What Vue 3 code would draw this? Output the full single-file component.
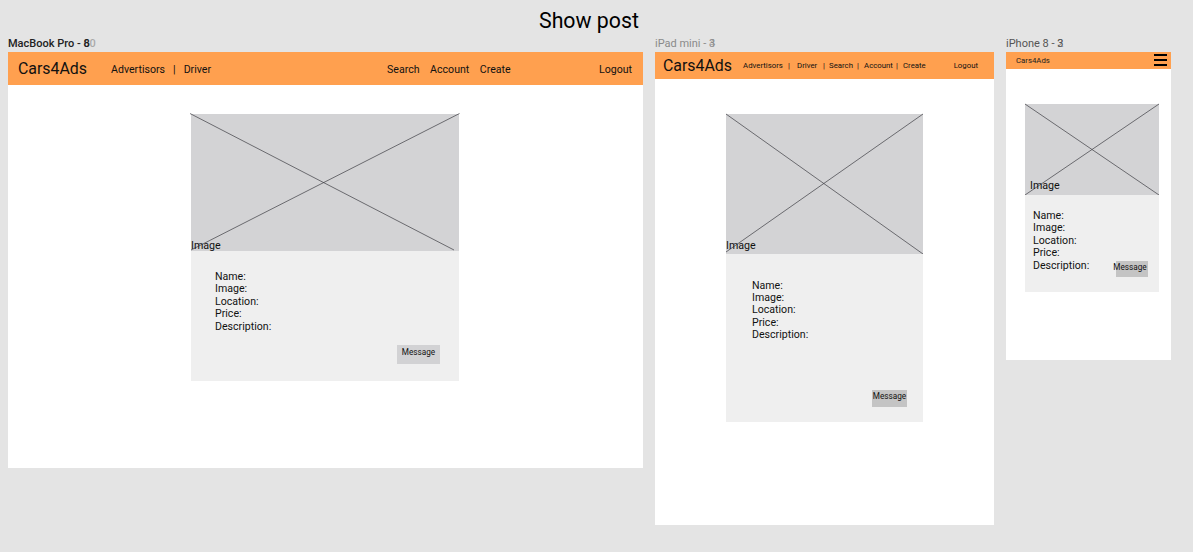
<script setup>
const fields = ['Name:', 'Image:', 'Location:', 'Price:', 'Description:']
const macLinks = ['Search', 'Account', 'Create']
const ipadLinks = [
  { text: 'Advertisors', cls: 'w-adv' },
  { text: '|', cls: 'w-sep1' },
  { text: 'Driver', cls: 'w-drv' },
  { text: '|', cls: 'w-sep2' },
  { text: 'Search', cls: 'w-sea' },
  { text: '|', cls: 'w-sep3' },
  { text: 'Account', cls: 'w-acc' },
  { text: '|', cls: 'w-sep3' },
  { text: 'Create', cls: 'w-cre' }
]
</script>

<template>
  <div class="canvas">
    <h1 class="title">Show post</h1>

    <!-- MacBook frame -->
    <div class="label label-mac">MacBook Pro - <span class="ghost">8<i>6</i><i class="faint">0</i></span></div>
    <section class="frame mac">
      <header class="bar">
        <span class="brand">Cars4Ads</span>
        <nav class="left-nav"><span>Advertisors</span><span>|</span><span>Driver</span></nav>
        <nav class="mid-nav"><span v-for="l in macLinks" :key="l">{{ l }}</span></nav>
        <span class="logout">Logout</span>
      </header>
      <div class="post">
        <div class="media">
          <svg class="cross" viewBox="0 0 270 139" width="270" height="139">
            <line x1="0" y1="0.5" x2="264" y2="137" />
            <line x1="269.5" y1="0.5" x2="1" y2="137" />
          </svg>
          <span class="media-label">Image</span>
        </div>
        <div class="details">
          <p v-for="f in fields" :key="f">{{ f }}</p>
          <button class="msg">Message</button>
        </div>
      </div>
    </section>

    <!-- iPad frame -->
    <div class="label label-ipad">iPad mini - <span class="ghost">3<i>4</i></span></div>
    <section class="frame ipad">
      <header class="bar">
        <span class="brand">Cars4Ads</span>
        <nav class="tight-nav"><span v-for="(l, i) in ipadLinks" :key="i" :class="l.cls">{{ l.text }}</span></nav>
        <span class="logout">Logout</span>
      </header>
      <div class="post">
        <div class="media">
          <svg class="cross" viewBox="0 0 197 140" width="197" height="140">
            <line x1="0" y1="0" x2="197" y2="140" />
            <line x1="197" y1="0" x2="0" y2="138" />
          </svg>
          <span class="media-label">Image</span>
        </div>
        <div class="details">
          <p v-for="f in fields" :key="f">{{ f }}</p>
          <button class="msg">Message</button>
        </div>
      </div>
    </section>

    <!-- iPhone frame -->
    <div class="label label-phone">iPhone 8 - <span class="ghost">3<i>2</i></span></div>
    <section class="frame phone">
      <header class="bar">
        <span class="brand">Cars4Ads</span>
        <span class="burger"><b></b><b></b><b></b></span>
      </header>
      <div class="post">
        <div class="media">
          <svg class="cross" viewBox="0 0 134 91" width="134" height="91">
            <line x1="0" y1="0" x2="134" y2="91" />
            <line x1="134" y1="0" x2="0" y2="91" />
          </svg>
          <span class="media-label">Image</span>
        </div>
        <div class="details">
          <p v-for="f in fields" :key="f">{{ f }}</p>
          <button class="msg"><span class="msg-text">Message</span></button>
        </div>
      </div>
    </section>
  </div>
</template>

<style>
html, body { margin: 0; background: #e4e4e4; }
</style>

<style scoped>
.canvas {
  position: relative;
  width: 1193px;
  height: 552px;
  overflow: hidden;
  background: #e4e4e4;
  color: #111;
  font-family: Roboto, "Liberation Sans", sans-serif;
}
.title {
  margin: 0;
  padding-top: 8px;
  padding-left: 539px;
  font-size: 21.3px;
  line-height: 26px;
  font-weight: 400;
  color: #000;
}

/* Artboards sit on a free canvas */
.label {
  position: absolute;
  top: 37px;
  font-size: 11px;
  line-height: 13px;
  white-space: nowrap;
}
.label-mac { left: 8px; color: #222; font-weight: 500; }
.label-ipad { left: 655px; color: #8a8a8a; }
.label-phone { left: 1006px; color: #555; }
.ghost { position: relative; display: inline-block; }
.ghost i {
  position: absolute;
  left: 0;
  top: 0;
  font-style: normal;
  opacity: 0.6;
}
.ghost i.faint { left: 6px; opacity: 0.3; }

.frame {
  position: absolute;
  top: 52px;
  background: #fff;
  display: flex;
  flex-direction: column;
}
.mac { left: 8px; width: 635px; height: 416px; }
.ipad { left: 655px; width: 339px; height: 473px; }
.phone { left: 1006px; width: 165px; height: 308px; }

.bar {
  display: flex;
  align-items: center;
  background: #ffa04f;
  flex: none;
}
.mac .bar { height: 33px; padding: 0 11px 0 10px; font-size: 10.6px; }
.ipad .bar { height: 27px; padding: 0 16px 0 8px; font-size: 7.8px; }
.phone .bar { height: 17px; padding: 0 4px 0 10px; }

.brand { font-size: 15.9px; line-height: 20px; }
.phone .brand { font-size: 7.8px; line-height: 10px; color: #222; }

.left-nav { display: flex; gap: 8px; margin-left: 24px; }
.mid-nav { display: flex; gap: 10.5px; margin-left: 176px; }
.mac .logout { margin-left: auto; }
.mac nav, .mac .logout { padding-top: 2px; }

.tight-nav { display: flex; margin-left: 11px; }
.tight-nav span { flex: none; white-space: nowrap; }
.w-adv { width: 45px; }
.w-sep1 { width: 9px; }
.w-drv { width: 26px; }
.w-sep2 { width: 6px; }
.w-sea { width: 28px; }
.w-sep3 { width: 7px; }
.w-acc { width: 32px; }
.w-cre { width: 22px; }
.ipad .logout { margin-left: auto; }

.burger {
  margin-left: auto;
  display: flex;
  flex-direction: column;
  gap: 2.4px;
  width: 13px;
  margin-bottom: 1px;
}
.burger b { display: block; height: 2.4px; background: #000; }

.post { display: flex; flex-direction: column; }
.mac .post { padding: 29px 0 0 183px; width: 268px; }
.ipad .post { padding: 35px 0 0 71px; width: 197px; }
.phone .post { padding: 35px 0 0 19px; width: 134px; }

.media { position: relative; background: #d3d3d5; flex: none; }
.mac .media { width: 268px; height: 137px; }
.ipad .media { width: 197px; height: 140px; }
.phone .media { width: 134px; height: 91px; }

.cross { position: absolute; left: 0; top: 0; overflow: visible; }
.mac .cross { left: -1px; top: -1px; }
.cross line { stroke: #3c3c42; stroke-width: 0.7; }

.media-label {
  position: absolute;
  font-size: 10.7px;
  line-height: 13px;
}
.mac .media-label { left: 0; bottom: -1px; }
.ipad .media-label { left: 0; bottom: 2px; }
.phone .media-label { left: 5px; bottom: 3px; }

.details { position: relative; background: #efefef; font-size: 10.6px; line-height: 12.4px; }
.details p { margin: 0; }
.mac .details { height: 130px; padding: 20px 0 0 24px; box-sizing: border-box; }
.ipad .details { height: 168px; padding: 25.5px 0 0 26px; box-sizing: border-box; }
.phone .details { height: 97px; padding: 15px 0 0 8px; box-sizing: border-box; }

.msg {
  position: absolute;
  border: 0;
  padding: 0;
  font-family: inherit;
  font-size: 8.2px;
  line-height: 10px;
  color: #111;
  white-space: nowrap;
  display: flex;
  justify-content: center;
}
.mac .msg { right: 19px; bottom: 17px; width: 43px; height: 19px; background: #d2d2d4; padding-top: 2px; box-sizing: border-box; }
.ipad .msg { right: 16px; bottom: 15px; width: 35px; height: 17px; background: #c4c4c4; padding-top: 1px; box-sizing: border-box; }
.phone .msg { right: 11px; bottom: 15px; width: 32px; height: 16px; background: #c4c4c4; padding-top: 1px; box-sizing: border-box; }
.msg-text { margin-left: -4px; }
</style>
